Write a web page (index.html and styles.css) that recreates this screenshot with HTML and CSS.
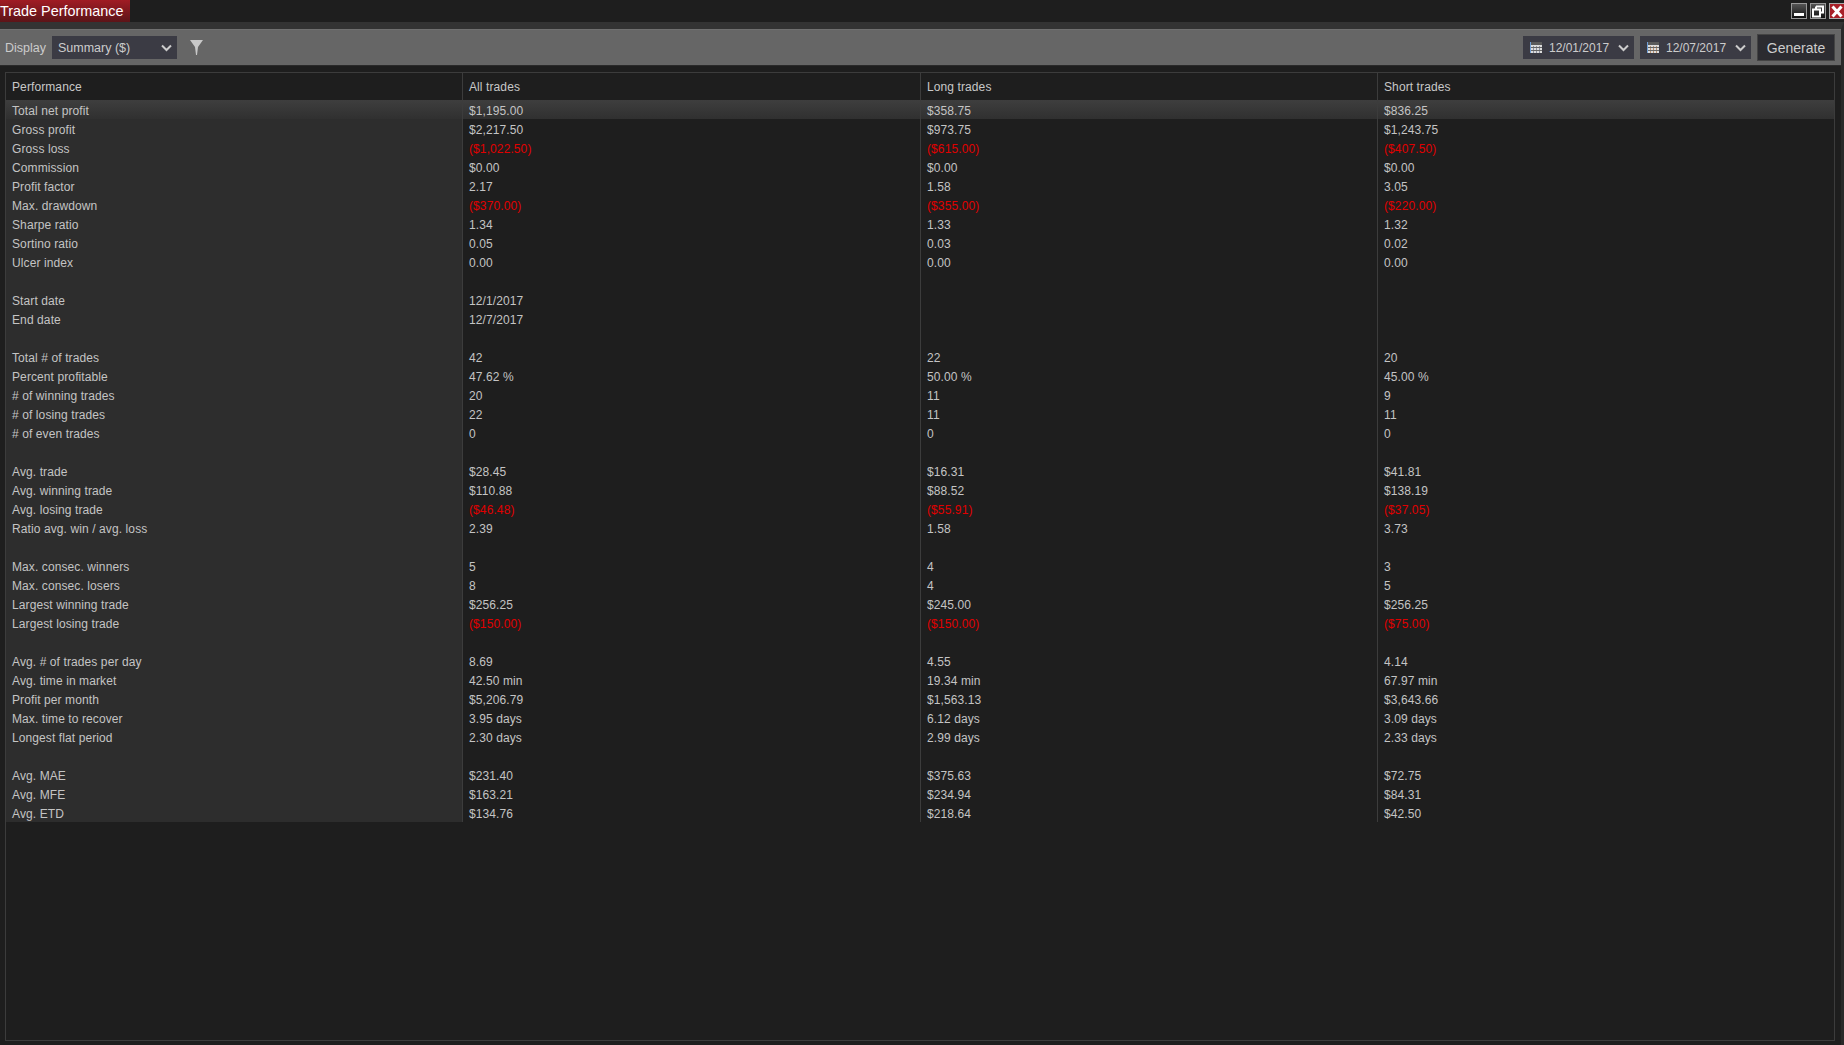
FILE: index.html
```html
<!DOCTYPE html>
<html lang="en">
<head>
  <meta charset="UTF-8" />
  <title>Trade Performance</title>
  <link rel="stylesheet" href="styles.css">
</head>
<body>

  <div class="titlebar">
    <div class="title-tab">Trade Performance</div>
    <div class="win-buttons">
      <div class="win-btn"><svg width="14" height="13" viewBox="0 0 14 13"><rect x="2" y="8" width="10" height="3" fill="#fff"/></svg></div>
      <div class="win-btn"><svg width="14" height="13" viewBox="0 0 14 13"><path d="M5 1.5h7v6h-2M5 1.5v2M2 4.5h7v7h-7z" fill="none" stroke="#fff" stroke-width="2"/></svg></div>
      <div class="win-btn close"><svg width="14" height="13" viewBox="0 0 14 13"><path d="M2.5 1.5l9 10M11.5 1.5l-9 10" fill="none" stroke="#fff" stroke-width="3"/></svg></div>
    </div>
  </div>

  <div class="main">
    <div class="toolbar">
      <span class="label">Display</span>
      <div class="select select-display">
        <span>Summary ($)</span>
        <svg class="chevron" width="11" height="8" viewBox="0 0 11 8"><path d="M1 1.5l4.5 4.5 4.5-4.5" fill="none" stroke="#ccc" stroke-width="2"/></svg>
      </div>
      <svg class="funnel" width="13" height="17" viewBox="0 0 13 17"><path d="M0 1h13l-5 7 -1 8h-1l-1-8z" fill="#c8c8c8"/></svg>
      <div class="spacer"></div>
      <div class="select select-date">
        <svg class="cal" width="12" height="11" viewBox="0 0 12 11"><rect width="12" height="11" fill="#dcdcdc"/><rect width="12" height="3" fill="#5a5a5a"/><path d="M0 0v11" stroke="#6f9fd8" stroke-width="2"/><path d="M3.5 4v7M6.5 4v7M9.5 4v7" stroke="#8a8fa0"/><path d="M1 5.5h11M1 8.5h11" stroke="#666"/></svg>
        <span>12/01/2017</span>
        <svg class="chevron" width="11" height="8" viewBox="0 0 11 8"><path d="M1 1.5l4.5 4.5 4.5-4.5" fill="none" stroke="#ccc" stroke-width="2"/></svg>
      </div>
      <div class="select select-date">
        <svg class="cal" width="12" height="11" viewBox="0 0 12 11"><rect width="12" height="11" fill="#dcdcdc"/><rect width="12" height="3" fill="#5a5a5a"/><path d="M0 0v11" stroke="#6f9fd8" stroke-width="2"/><path d="M3.5 4v7M6.5 4v7M9.5 4v7" stroke="#b89070"/><path d="M1 5.5h11M1 8.5h11" stroke="#666"/></svg>
        <span>12/07/2017</span>
        <svg class="chevron" width="11" height="8" viewBox="0 0 11 8"><path d="M1 1.5l4.5 4.5 4.5-4.5" fill="none" stroke="#ccc" stroke-width="2"/></svg>
      </div>
      <button class="generate">Generate</button>
    </div>

    <div class="content">
      <div class="grid-frame">
        <table class="perf">
          <colgroup>
            <col class="col-a"><col class="col-b"><col class="col-c"><col>
          </colgroup>
          <thead>
            <tr><th>Performance</th><th>All trades</th><th>Long trades</th><th>Short trades</th></tr>
          </thead>
          <tbody>
            <tr class="selected"><td>Total net profit</td><td>$1,195.00</td><td>$358.75</td><td>$836.25</td></tr>
            <tr><td>Gross profit</td><td>$2,217.50</td><td>$973.75</td><td>$1,243.75</td></tr>
            <tr><td>Gross loss</td><td class="neg">($1,022.50)</td><td class="neg">($615.00)</td><td class="neg">($407.50)</td></tr>
            <tr><td>Commission</td><td>$0.00</td><td>$0.00</td><td>$0.00</td></tr>
            <tr><td>Profit factor</td><td>2.17</td><td>1.58</td><td>3.05</td></tr>
            <tr><td>Max. drawdown</td><td class="neg">($370.00)</td><td class="neg">($355.00)</td><td class="neg">($220.00)</td></tr>
            <tr><td>Sharpe ratio</td><td>1.34</td><td>1.33</td><td>1.32</td></tr>
            <tr><td>Sortino ratio</td><td>0.05</td><td>0.03</td><td>0.02</td></tr>
            <tr><td>Ulcer index</td><td>0.00</td><td>0.00</td><td>0.00</td></tr>
            <tr><td></td><td></td><td></td><td></td></tr>
            <tr><td>Start date</td><td>12/1/2017</td><td></td><td></td></tr>
            <tr><td>End date</td><td>12/7/2017</td><td></td><td></td></tr>
            <tr><td></td><td></td><td></td><td></td></tr>
            <tr><td>Total # of trades</td><td>42</td><td>22</td><td>20</td></tr>
            <tr><td>Percent profitable</td><td>47.62 %</td><td>50.00 %</td><td>45.00 %</td></tr>
            <tr><td># of winning trades</td><td>20</td><td>11</td><td>9</td></tr>
            <tr><td># of losing trades</td><td>22</td><td>11</td><td>11</td></tr>
            <tr><td># of even trades</td><td>0</td><td>0</td><td>0</td></tr>
            <tr><td></td><td></td><td></td><td></td></tr>
            <tr><td>Avg. trade</td><td>$28.45</td><td>$16.31</td><td>$41.81</td></tr>
            <tr><td>Avg. winning trade</td><td>$110.88</td><td>$88.52</td><td>$138.19</td></tr>
            <tr><td>Avg. losing trade</td><td class="neg">($46.48)</td><td class="neg">($55.91)</td><td class="neg">($37.05)</td></tr>
            <tr><td>Ratio avg. win / avg. loss</td><td>2.39</td><td>1.58</td><td>3.73</td></tr>
            <tr><td></td><td></td><td></td><td></td></tr>
            <tr><td>Max. consec. winners</td><td>5</td><td>4</td><td>3</td></tr>
            <tr><td>Max. consec. losers</td><td>8</td><td>4</td><td>5</td></tr>
            <tr><td>Largest winning trade</td><td>$256.25</td><td>$245.00</td><td>$256.25</td></tr>
            <tr><td>Largest losing trade</td><td class="neg">($150.00)</td><td class="neg">($150.00)</td><td class="neg">($75.00)</td></tr>
            <tr><td></td><td></td><td></td><td></td></tr>
            <tr><td>Avg. # of trades per day</td><td>8.69</td><td>4.55</td><td>4.14</td></tr>
            <tr><td>Avg. time in market</td><td>42.50 min</td><td>19.34 min</td><td>67.97 min</td></tr>
            <tr><td>Profit per month</td><td>$5,206.79</td><td>$1,563.13</td><td>$3,643.66</td></tr>
            <tr><td>Max. time to recover</td><td>3.95 days</td><td>6.12 days</td><td>3.09 days</td></tr>
            <tr><td>Longest flat period</td><td>2.30 days</td><td>2.99 days</td><td>2.33 days</td></tr>
            <tr><td></td><td></td><td></td><td></td></tr>
            <tr><td>Avg. MAE</td><td>$231.40</td><td>$375.63</td><td>$72.75</td></tr>
            <tr><td>Avg. MFE</td><td>$163.21</td><td>$234.94</td><td>$84.31</td></tr>
            <tr><td>Avg. ETD</td><td>$134.76</td><td>$218.64</td><td>$42.50</td></tr>
          </tbody>
        </table>
      </div>
    </div>
  </div>

</body>
</html>
```

FILE: styles.css
```css
/* Reset */
* {
  margin: 0; padding: 0; box-sizing: border-box;
}
html, body {
  height: 100%;
  overflow: hidden;
}
body {
  display: flex;
  flex-direction: column;
  background: #1e1e1e;
  font-family: "Liberation Sans", Arial, sans-serif;
  font-size: 12px;
  color: #cfcfcf;
}

/* Title bar */
.titlebar {
  height: 22px;
  display: flex;
  justify-content: space-between;
  background: #1e1e1e;
}
.title-tab {
  width: 130px;
  height: 22px;
  line-height: 22px;
  font-size: 14.4px;
  color: #fff;
  white-space: nowrap;
  background: linear-gradient(to bottom, #a01c24, #5c1418);
}
.win-buttons {
  display: flex;
  gap: 3px;
  padding-top: 3px;
}
.win-btn {
  width: 16px;
  height: 16px;
  display: flex;
  align-items: center;
  justify-content: center;
  border: 1px solid #999;
  background: linear-gradient(to bottom, #555, #111);
}
.win-btn.close {
  width: 15px;
  border-right: none;
  border-color: #aaa;
  background: #a82028;
}

/* Main area */
.main {
  flex: 1;
  display: flex;
  flex-direction: column;
  border-top: 7px solid #333;
  border-right: 3px solid #292929;
}

/* Toolbar */
.toolbar {
  height: 37px;
  display: flex;
  align-items: center;
  padding: 0 6px 0 5px;
  background: #666;
  border-top: 1px solid #707070;
  border-bottom: 1px solid #2a2a2a;
}
.label {
  color: #ccc;
  font-size: 12.5px;
}
.select {
  height: 23px;
  display: flex;
  align-items: center;
  background: #3b3b44;
  color: #ccc;
  font-size: 12px;
}
.select-display {
  width: 125px;
  margin-left: 6px;
  padding: 0 5px 0 6px;
  justify-content: space-between;
  font-size: 12.5px;
}
.select-date {
  width: 111px;
  margin-right: 6px;
  padding: 0 5px 0 7px;
}
.select-date span {
  margin-left: 7px;
  flex: 1;
}
.funnel {
  margin-left: 13px;
}
.spacer {
  flex: 1;
}
.generate {
  width: 78px;
  height: 27px;
  font-family: inherit;
  font-size: 14px;
  color: #ccc;
  background: #2b2b30;
  border: 1px solid #444;
}

/* Grid */
.content {
  flex: 1;
  padding: 6px 6px 4px 5px;
}
.grid-frame {
  height: 100%;
  border: 1px solid #3c3c3c;
}
.perf {
  width: 100%;
  border-collapse: separate;
  border-spacing: 0;
  table-layout: fixed;
  letter-spacing: 0.1px;
}
.col-a { width: 457px; }
.col-b { width: 458px; }
.col-c { width: 457px; }
.perf th,
.perf td {
  padding: 0 6px;
  text-align: left;
  font-weight: normal;
  white-space: nowrap;
  border-right: 1px solid #3c3c3c;
}
.perf th:last-child,
.perf td:last-child {
  border-right: none;
}
.perf th {
  height: 27px;
  color: #c8c8c8;
}
.perf td {
  height: 19px;
  padding-top: 4px;
  line-height: 15px;
  color: #c4c4c4;
}
.perf td:first-child {
  background: #2d2d2d;
}
.perf .selected td {
  background: linear-gradient(to bottom, #3e3e3e, #303030);
}
.perf td.neg {
  color: #e00000;
}
```
